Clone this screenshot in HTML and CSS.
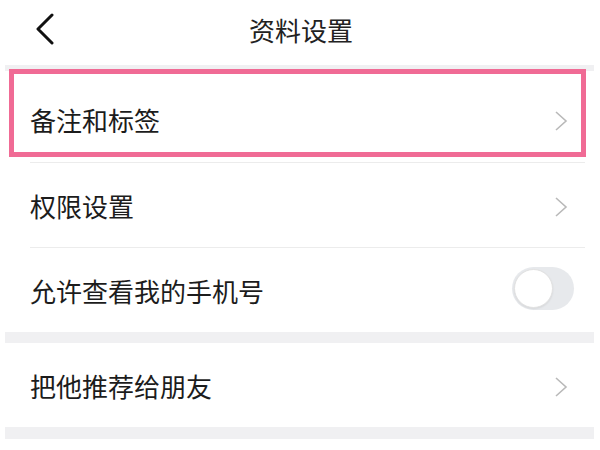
FILE: index.html
```html
<!DOCTYPE html>
<html lang="zh-CN">

<head>
  <meta charset="UTF-8">
  <meta name="viewport" content="width=device-width, initial-scale=1.0">
  <title>资料设置</title>
  <link rel="stylesheet" href="styles.css">
</head>

<body>
  <div class="header">
    <svg class="back" width="22" height="32" viewBox="0 0 22 32">
      <polyline points="17,2 3,16 17,30" fill="none" stroke="#111" stroke-width="3" stroke-linecap="round" stroke-linejoin="round"/>
    </svg>
    <h1 class="title">资料设置</h1>
  </div>

  <div class="gap gap-top"></div>

  <div class="row row-first">
    <span class="label">备注和标签</span>
    <svg class="arrow" width="14" height="22" viewBox="0 0 14 22">
      <polyline points="2,2 12,11 2,20" fill="none" stroke="#b9b9b9" stroke-width="1.6"/>
    </svg>
    <div class="highlight"></div>
  </div>
  <div class="divider"></div>

  <div class="row">
    <span class="label">权限设置</span>
    <svg class="arrow" width="14" height="22" viewBox="0 0 14 22">
      <polyline points="2,2 12,11 2,20" fill="none" stroke="#b9b9b9" stroke-width="1.6"/>
    </svg>
  </div>
  <div class="divider"></div>

  <div class="row">
    <span class="label">允许查看我的手机号</span>
    <div class="switch"><div class="knob"></div></div>
  </div>

  <div class="gap gap-mid"></div>

  <div class="row">
    <span class="label">把他推荐给朋友</span>
    <svg class="arrow" width="14" height="22" viewBox="0 0 14 22">
      <polyline points="2,2 12,11 2,20" fill="none" stroke="#b9b9b9" stroke-width="1.6"/>
    </svg>
  </div>

  <div class="gap gap-bottom"></div>
</body>

</html>
```

FILE: styles.css
```css
/* page */
body {
  margin: 0;
  background-color: #fff;
  font-family: "Noto Sans CJK SC", "Noto Sans", sans-serif;
  color: #1c1c1c;
}

/* top bar */
.header {
  height: 65px;
  display: flex;
  align-items: center;
  justify-content: center;
  position: relative;
}

.header .back {
  position: absolute;
  left: 35px;
  top: 13px;
}

.title {
  margin: 0 0 6px 2px;
  font-size: 26px;
  line-height: 1;
  font-weight: normal;
  color: #222;
}

/* grey separators between groups */
.gap {
  background-color: #f0f0f2;
  margin: 0 6px 0 5px;
}

.gap-top {
  height: 6px;
}

.gap-mid {
  height: 11px;
}

.gap-bottom {
  height: 12px;
}

/* list rows */
.row {
  height: 84px;
  padding: 1px 32px 0 30px;
  box-sizing: border-box;
  display: flex;
  align-items: center;
  justify-content: space-between;
}

.row-first {
  height: 91px;
  padding-top: 6px;
  position: relative;
}

.label {
  font-size: 26px;
  line-height: 1;
}

.arrow {
  margin-top: 2px;
}

.divider {
  height: 1px;
  background-color: #ececec;
  margin: 0 15px 0 30px;
}

/* annotation box */
.highlight {
  position: absolute;
  left: 9px;
  top: -2px;
  width: 577px;
  height: 88px;
  box-sizing: border-box;
  border: 5px solid #f06b95;
}

/* toggle */
.switch {
  width: 62px;
  height: 43px;
  border-radius: 22px;
  background-color: #e7e9ec;
  margin-right: -6px;
  margin-top: -4px;
  display: flex;
  align-items: center;
  padding-left: 2px;
  box-sizing: border-box;
}

.knob {
  width: 39px;
  height: 39px;
  border-radius: 50%;
  background-color: #fff;
  box-sizing: border-box;
  border: 1px solid #e2e2e2;
  box-shadow: 0 1px 2px rgba(0, 0, 0, 0.08);
}
```
